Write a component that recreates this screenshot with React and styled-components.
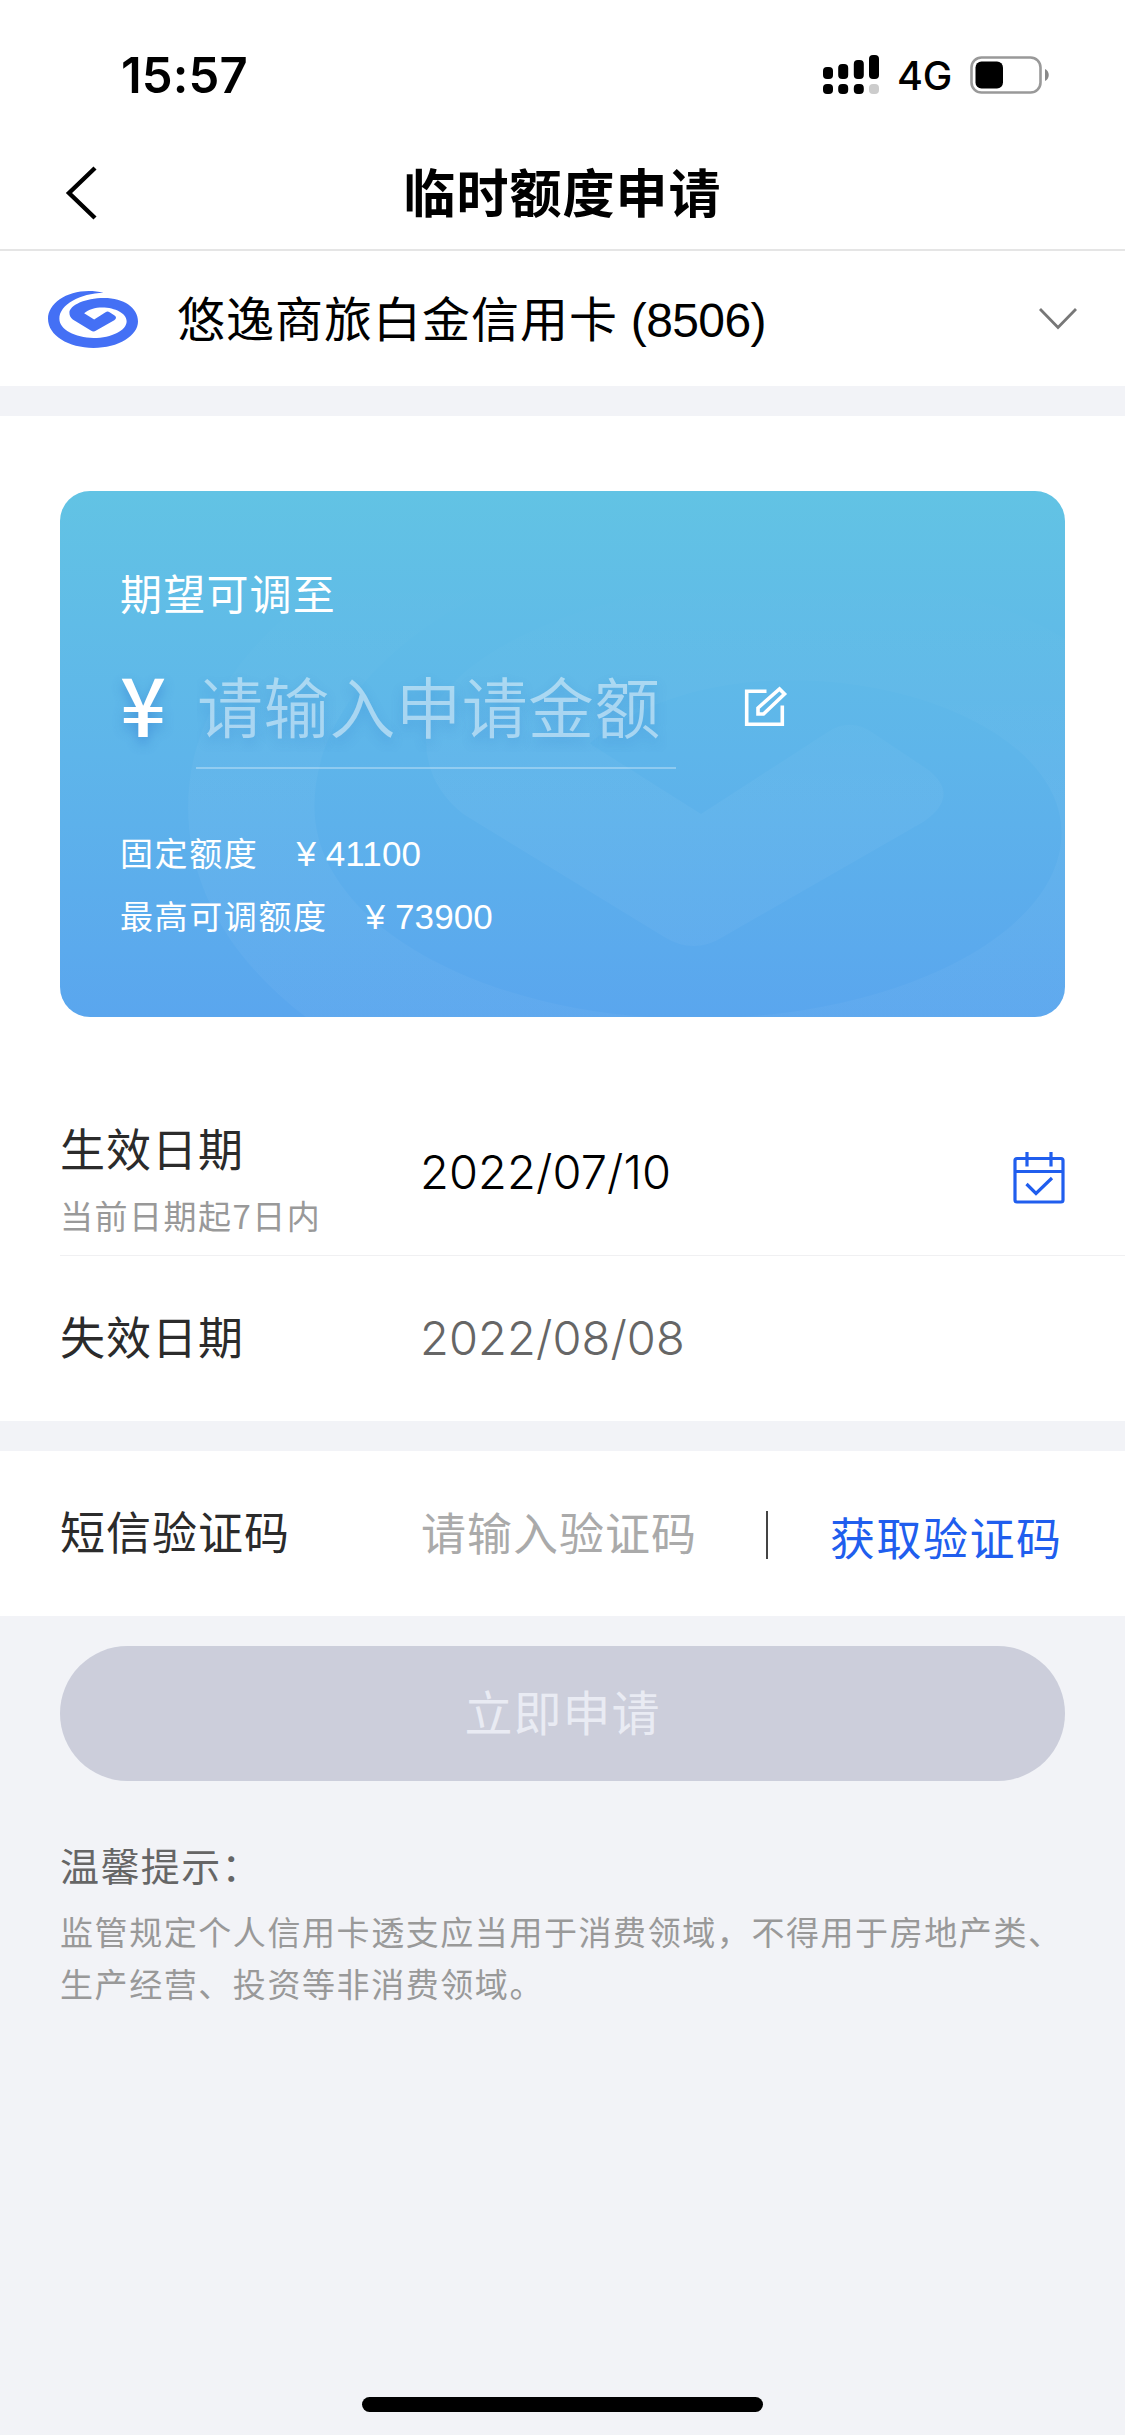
import React, { useState } from "react";
import styled, { createGlobalStyle } from "styled-components";

const GlobalStyle = createGlobalStyle`
  * {
    box-sizing: border-box;
  }
  body {
    margin: 0;
    background: #f2f3f7;
    font-family: "Noto Sans CJK SC", "Noto Sans", sans-serif;
  }
  input,
  button {
    font-family: inherit;
  }
`;
const Page = styled.div`
  width: 1125px;
  height: 2435px;
  display: flex;
  flex-direction: column;
  overflow: hidden;
  background: #f2f3f7;
`;
const StatusBar = styled.div`
  height: 132px;
  padding: 18px 75px 0 121px;
  display: flex;
  align-items: center;
  justify-content: space-between;
  flex-shrink: 0;
  background: #fff;
`;
const Time = styled.span`
  font-family: Inter, sans-serif;
  font-size: 49px;
  font-weight: 600;
  line-height: 60px;
  letter-spacing: 0.1px;
  padding-top: 2px;
  color: #000;
`;
const StatusIcons = styled.div`
  display: flex;
  align-items: center;
`;
const Network = styled.span`
  width: 91px;
  padding: 2px 0 0 18px;
  font-family: Inter, sans-serif;
  font-size: 39.5px;
  line-height: 50px;
  font-weight: 500;
  letter-spacing: -0.2px;
`;
const NavBar = styled.div`
  height: 119px;
  padding: 0 64px;
  display: grid;
  grid-template-columns: 60px 1fr 60px;
  align-items: center;
  flex-shrink: 0;
  background: #fff;
  border-bottom: 2px solid #e5e5e5;
`;
const BackIcon = styled.svg`
  margin-top: 4px;
`;
const Title = styled.h1`
  margin: 0;
  text-align: center;
  font-size: 52px;
  line-height: 60px;
  font-weight: 700;
  letter-spacing: 1px;
  color: #000;
`;
const CardSelect = styled.div`
  height: 135px;
  padding: 0 48px;
  display: flex;
  align-items: center;
  flex-shrink: 0;
  background: #fff;
`;
const CardName = styled.span`
  flex: 1;
  padding: 5px 0 0 39px;
  font-family: "Liberation Sans", "Noto Sans CJK SC", sans-serif;
  font-size: 48px;
  line-height: 60px;
  letter-spacing: -0.6px;
  color: #000;
`;
const CardNameText = styled.span`
  letter-spacing: 1px;
`;
const Gap = styled.div`
  height: 30px;
  flex-shrink: 0;
`;
const Panel = styled.section`
  flex-shrink: 0;
  background: #fff;
`;
const LimitPanel = styled(Panel)`
  padding-top: 75px;
`;
const LimitCard = styled.div`
  position: relative;
  width: 1005px;
  height: 526px;
  margin: 0 60px;
  padding: 68px 60px 0;
  overflow: hidden;
  border-radius: 30px;
  background: linear-gradient(180deg, #62c3e4 0%, #5eb5ea 50%, #5aa6ee 100%);
  color: #fff;
`;
const Watermark = styled.svg`
  position: absolute;
  left: 128px;
  top: -4px;
`;
const LimitLabel = styled.div`
  position: relative;
  height: 66px;
  font-size: 42px;
  line-height: 66px;
  letter-spacing: 1.2px;
`;
const AmountRow = styled.div`
  position: relative;
  height: 144px;
  display: flex;
  align-items: flex-start;
`;
const Yen = styled.span`
  width: 76px;
  padding-top: 27px;
  font-size: 81px;
  line-height: 100px;
  font-weight: 500;
  text-shadow: 0 6px 12px rgba(40, 110, 200, 0.45);
`;
const AmountInput = styled.input`
  width: 480px;
  height: 144px;
  margin-right: 68px;
  padding: 16px 0 0 1px;
  border: none;
  border-bottom: 2px solid rgba(255, 255, 255, 0.3);
  outline: none;
  background: transparent;
  font-size: 66px;
  font-weight: 350;
  letter-spacing: 0.2px;
  color: #fff;
  text-shadow: 0 6px 12px rgba(40, 110, 200, 0.25);
  &::placeholder {
    color: rgba(255, 255, 255, 0.48);
    opacity: 1;
  }
`;
const EditIcon = styled.svg`
  margin-top: 61px;
`;
const Limits = styled.div`
  position: relative;
  padding-top: 52px;
`;
const LimitLine = styled.div`
  display: flex;
  height: 63px;
  font-size: 33px;
  line-height: 63px;
  letter-spacing: 1.6px;
`;
const LimitValue = styled.span`
  padding: 1px 0 0 38px;
  font-family: "Liberation Sans", sans-serif;
  font-size: 35px;
  letter-spacing: 0.1px;
`;
const FormRow = styled.div`
  display: flex;
  align-items: center;
  height: ${(props) => props.$height}px;
  margin-left: 60px;
  padding-top: ${(props) => props.$top || 0}px;
  padding-right: 60px;
  border-bottom: ${(props) => (props.$divided ? "1px solid #f0f0f2" : "none")};
`;
const FieldLabel = styled.div`
  width: 361px;
  margin-top: -5px;
  font-size: 45px;
  line-height: 60px;
  letter-spacing: 1px;
  color: #2b2b2b;
`;
const Hint = styled.div`
  font-size: 33px;
  line-height: 50px;
  letter-spacing: 1.5px;
  margin: 12px 0 -8px;
  color: #999;
`;
const DateValue = styled.div`
  flex: 1;
  margin-top: ${(props) => (props.$muted ? -2 : -12)}px;
  margin-left: -1px;
  font-family: Inter, sans-serif;
  font-size: 47px;
  font-weight: 350;
  line-height: 60px;
  letter-spacing: 0.1px;
  color: ${(props) => (props.$muted ? "#666" : "#000")};
`;
const CodeInput = styled.input`
  width: 345px;
  height: 90px;
  padding: 0 0 5px;
  border: none;
  outline: none;
  background: transparent;
  font-size: 45px;
  letter-spacing: 1px;
  color: #000;
  &::placeholder {
    color: #aaa;
    opacity: 1;
  }
`;
const Divider = styled.span`
  width: 2px;
  height: 48px;
  margin-top: 2px;
  background: #444;
`;
const CodeButton = styled.button`
  margin-left: 62px;
  padding: 7px 0 0;
  border: none;
  background: none;
  white-space: nowrap;
  font-size: 45px;
  line-height: 60px;
  letter-spacing: 1.5px;
  color: #205eee;
`;
const SubmitButton = styled.button`
  width: 1005px;
  height: 135px;
  margin: 30px 60px 0;
  padding-bottom: 9px;
  flex-shrink: 0;
  border: none;
  border-radius: 68px;
  background: #cccedb;
  font-size: 48px;
  letter-spacing: 1px;
  color: #e9ebf3;
`;
const Tips = styled.div`
  flex: 1;
  padding: 53px 60px 0;
`;
const TipsTitle = styled.div`
  font-size: 39px;
  line-height: 60px;
  letter-spacing: 1.4px;
  color: #666;
`;
const TipsText = styled.p`
  margin: 11px 0 0;
  font-size: 33px;
  line-height: 52px;
  letter-spacing: 1.57px;
  color: #999;
`;
const HomeIndicator = styled.div`
  width: 401px;
  height: 15px;
  margin: 0 auto 23px;
  flex-shrink: 0;
  border-radius: 8px;
  background: #000;
`;

const swirl =
  "M166 8C76 -12 0 33 0 86C0 136 61 173 136 173C211 173 269 136 269 94C269 53 226 24 168 24C111 24 64 46 64 68Q64 80 74 88L128 121Q136 126 144 121L198 90Q208 83 199 76L184 66Q178 62 172 66L138 88L108 69C121 58 141 52 162 52C201 52 235 70 235 93C235 120 191 143 136 143C81 143 34 118 34 86C34 43 96 10 166 8Z";

const Signal = () => (
  <svg width="56" height="40" viewBox="0 0 56 40">
    <rect x="0" y="12" width="10" height="12" rx="4" />
    <rect x="15.2" y="9" width="10" height="15" rx="4" />
    <rect x="30.8" y="5" width="10" height="19" rx="4" />
    <rect x="46" y="0" width="10" height="24" rx="4" />
    <rect x="0" y="29" width="10" height="10" rx="4" />
    <rect x="15.2" y="29" width="10" height="10" rx="4" />
    <rect x="30.8" y="29" width="10" height="10" rx="4" />
    <rect x="46" y="29" width="10" height="10" rx="4" fill="#ccc" />
  </svg>
);

const Battery = () => (
  <svg width="80" height="38" viewBox="0 0 80 38">
    <rect x="1.5" y="1.5" width="69" height="35" rx="10" fill="none" stroke="#999" strokeWidth="2.6" />
    <rect x="5.5" y="5.5" width="27.5" height="27" rx="6" />
    <path d="M75 13C80 15 80 23 75 25Z" fill="#888" />
  </svg>
);

const App = () => {
  const [amount, setAmount] = useState("");
  const [code, setCode] = useState("");
  return (
    <>
      <GlobalStyle />
      <Page>
        <StatusBar>
          <Time>15:57</Time>
          <StatusIcons>
            <Signal />
            <Network>4G</Network>
            <Battery />
          </StatusIcons>
        </StatusBar>
        <NavBar>
          <BackIcon width="34" height="54" viewBox="0 0 34 54" fill="none" stroke="#000" strokeWidth="4.4">
            <path d="M31 2L5 27L31 52" />
          </BackIcon>
          <Title>临时额度申请</Title>
        </NavBar>
        <CardSelect>
          <svg width="90" height="58" viewBox="0 0 269 173">
            <path d={swirl} fill="#4470f5" />
          </svg>
          <CardName>
            <CardNameText>悠逸商旅白金信用卡</CardNameText> (8506)
          </CardName>
          <svg width="38" height="24" viewBox="0 0 38 24" fill="none" stroke="#777" strokeWidth="2.8">
            <path d="M1 2L19 20.5L37 2" />
          </svg>
        </CardSelect>
        <Gap />
        <LimitPanel>
          <LimitCard>
            <Watermark width="1000" height="643" viewBox="0 0 269 173">
              <defs>
                <linearGradient id="fade" x1="0" y1="0" x2="0" y2="1">
                  <stop offset="0.12" stopColor="#fff" stopOpacity="0" />
                  <stop offset="0.5" stopColor="#fff" stopOpacity="0.04" />
                  <stop offset="1" stopColor="#fff" stopOpacity="0.03" />
                </linearGradient>
              </defs>
              <path d={swirl} fill="url(#fade)" />
            </Watermark>
            <LimitLabel>期望可调至</LimitLabel>
            <AmountRow>
              <Yen>¥</Yen>
              <AmountInput
                placeholder="请输入申请金额"
                value={amount}
                onChange={(e) => setAmount(e.target.value)}
              />
              <EditIcon width="44" height="42" viewBox="0 0 44 42" fill="none" stroke="#fff" strokeWidth="3.6">
                <path d="M22.5 5.2H2.7V38.3H38.3V19.5" />
                <path d="M14 28V22L35.5 3L40.5 8L19.5 28Z" />
              </EditIcon>
            </AmountRow>
            <Limits>
              <LimitLine>
                固定额度<LimitValue>¥ 41100</LimitValue>
              </LimitLine>
              <LimitLine>
                最高可调额度<LimitValue>¥ 73900</LimitValue>
              </LimitLine>
            </Limits>
          </LimitCard>
          <FormRow $height={239} $top={83} $divided>
            <FieldLabel>
              生效日期
              <Hint>当前日期起7日内</Hint>
            </FieldLabel>
            <DateValue>2022/07/10</DateValue>
            <svg width="52" height="52" viewBox="0 0 52 52" fill="none" stroke="#205eee" strokeWidth="3.2">
              <rect x="2" y="6.5" width="48" height="43.5" rx="2" />
              <path d="M2 19.5H50M14 0V14.5M38 0V14.5M13.5 32L23 41.5L39 26" />
            </svg>
          </FormRow>
          <FormRow $height={165}>
            <FieldLabel>失效日期</FieldLabel>
            <DateValue $muted>2022/08/08</DateValue>
          </FormRow>
        </LimitPanel>
        <Gap />
        <Panel>
          <FormRow $height={165}>
            <FieldLabel>短信验证码</FieldLabel>
            <CodeInput
              placeholder="请输入验证码"
              value={code}
              onChange={(e) => setCode(e.target.value)}
            />
            <Divider />
            <CodeButton>获取验证码</CodeButton>
          </FormRow>
        </Panel>
        <SubmitButton>立即申请</SubmitButton>
        <Tips>
          <TipsTitle>温馨提示：</TipsTitle>
          <TipsText>
            监管规定个人信用卡透支应当用于消费领域，不得用于房地产类、生产经营、投资等非消费领域。
          </TipsText>
        </Tips>
        <HomeIndicator />
      </Page>
    </>
  );
};

export default App;
